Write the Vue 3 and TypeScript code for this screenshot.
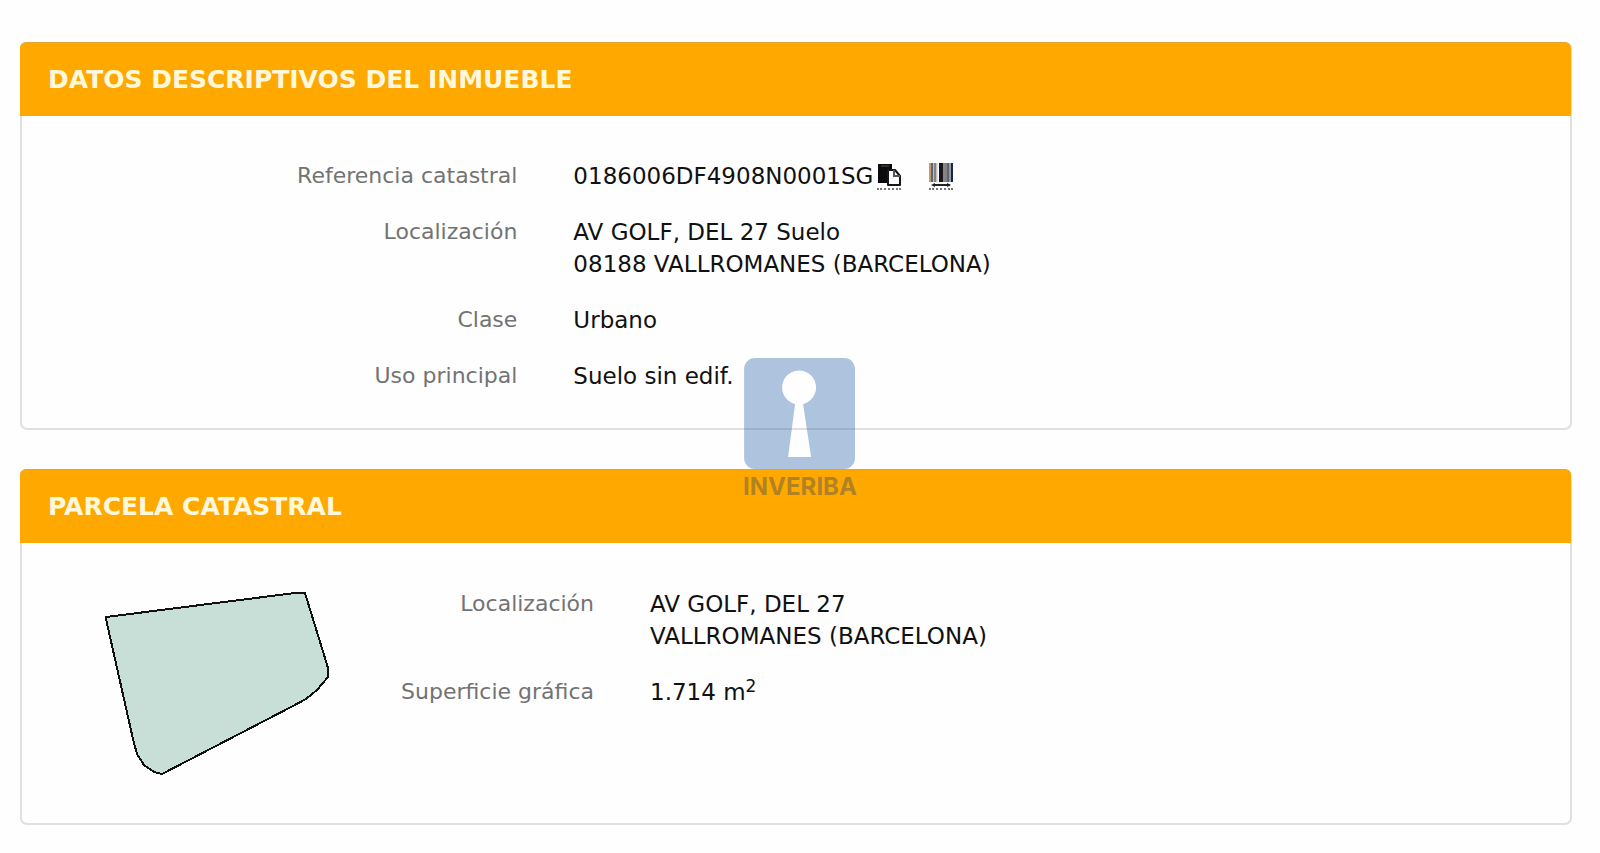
<script setup lang="ts">
interface Field {
  label: string
  lines: string[]
  sup?: string
  tools?: boolean
}

const propertyFields: Field[] = [
  { label: 'Referencia catastral', lines: ['0186006DF4908N0001SG'], tools: true },
  { label: 'Localización', lines: ['AV GOLF, DEL 27 Suelo', '08188 VALLROMANES (BARCELONA)'] },
  { label: 'Clase', lines: ['Urbano'] },
  { label: 'Uso principal', lines: ['Suelo sin edif.'] },
]

const parcelFields: Field[] = [
  { label: 'Localización', lines: ['AV GOLF, DEL 27', 'VALLROMANES (BARCELONA)'] },
  { label: 'Superficie gráfica', lines: ['1.714 m'], sup: '2' },
]

function copyReference(): void {
  navigator.clipboard?.writeText(propertyFields[0].lines[0])
}
</script>

<template>
  <main class="page">
    <section class="card">
      <h2 class="card-title">DATOS DESCRIPTIVOS DEL INMUEBLE</h2>
      <dl class="fields">
        <div v-for="field in propertyFields" :key="field.label" class="field">
          <dt>{{ field.label }}</dt>
          <dd>
            <div v-for="line in field.lines" :key="line" class="line">
              <span>{{ line }}</span>
              <template v-if="field.tools">
                <button class="tool" type="button" aria-label="Copiar" @click="copyReference">
                  <svg width="24" height="24" viewBox="0 0 24 24" aria-hidden="true">
                    <path d="M1 1h14v5h-4v14H1z" fill="#0b0b0f" />
                    <path d="M4 3h8" stroke="#555" stroke-width="1" />
                    <path d="M11 7h7l5 6v9H11z" fill="#fff" stroke="#16161c" stroke-width="2" stroke-linejoin="round" />
                    <path d="M17 7v6h6" fill="none" stroke="#55555c" stroke-width="2" />
                  </svg>
                </button>
                <a class="tool barcode" href="#" aria-label="Código de barras">
                  <svg width="24" height="24" viewBox="0 0 24 24" aria-hidden="true">
                    <path d="M1 0v19" stroke="#c79a68" stroke-width="2" />
                    <path d="M3 0v19M19 0v19" stroke="#56657f" stroke-width="2" />
                    <path d="M6 0v19" stroke="#85817f" stroke-width="3" />
                    <path d="M8 0v19" stroke="#bcc5cf" stroke-width="1" />
                    <path d="M12 0v19" stroke="#17171d" stroke-width="4" />
                    <path d="M15 0v19" stroke="#86868e" stroke-width="2" />
                    <path d="M17 0v19" stroke="#91806f" stroke-width="2" />
                    <path d="M21 0v19" stroke="#9999a0" stroke-width="2" />
                    <path d="M23 0v19" stroke="#172648" stroke-width="2" />
                    <path d="M4 22h17" stroke="#222" stroke-width="2" />
                    <path d="M2 22l4-2v4zM22 22l-4-2v4z" fill="#222" />
                  </svg>
                </a>
              </template>
            </div>
          </dd>
        </div>
      </dl>
    </section>

    <section class="card">
      <h2 class="card-title">PARCELA CATASTRAL</h2>
      <div class="parcel">
        <svg class="plot" width="226" height="186" viewBox="0 0 226 186" role="img" aria-label="Parcela">
          <path
            d="M2 26L10 25L191 2H201L217 54L224 77V86L213 99L202 108L189 115L58 183L50 181L40 174L33 163L29 148L2 28Z"
            fill="#c7dfd7"
            stroke="#111"
            stroke-width="2"
            shape-rendering="crispEdges"
          />
        </svg>
        <dl class="fields parcel-fields">
          <div v-for="field in parcelFields" :key="field.label" class="field">
            <dt>{{ field.label }}</dt>
            <dd>
              <div v-for="line in field.lines" :key="line" class="line">
                <span>{{ line }}<sup v-if="field.sup">{{ field.sup }}</sup></span>
              </div>
            </dd>
          </div>
        </dl>
      </div>
    </section>

    <div class="watermark">
      <svg width="111" height="111" viewBox="0 0 111 111" aria-hidden="true">
        <path
          fill="#396cac"
          fill-rule="evenodd"
          d="M11 0H100A11 11 0 0 1 111 11V100A11 11 0 0 1 100 111H11A11 11 0 0 1 0 100V11A11 11 0 0 1 11 0ZM51 46L44 99H67L59 46A17 17 0 1 0 51 46Z"
        />
      </svg>
      <span>INVERIBA</span>
    </div>
  </main>
</template>

<style>
body {
  margin: 0;
  background: #fefefe;
}
</style>

<style scoped>
.page {
  position: relative;
  display: flex;
  flex-direction: column;
  gap: 39px;
  padding: 42px 28px 28px 20px;
  font-family: 'DejaVu Sans', Verdana, sans-serif;
  font-size: 23px;
  line-height: 32px;
  color: #111;
}

.card {
  border: 2px solid #e0e0e0;
  border-top: 0;
  border-radius: 7px;
  background: #fefefe;
}

.card-title {
  margin: 0 -1px 0 -2px;
  padding: 22px 28px 21px;
  border-top: 1px solid #e3a532;
  border-radius: 6px 6px 0 0;
  background: #ffa800;
  color: #fff8dc;
  font-size: 25px;
  font-weight: bold;
  line-height: 30px;
}

.fields {
  display: flex;
  flex-direction: column;
  gap: 24px;
  margin: 0;
  padding: 44px 0 36px;
}

.field {
  display: grid;
  grid-template-columns: 32% 1fr;
  column-gap: 56px;
}

dt {
  color: #737373;
  font-size: 22px;
  text-align: right;
}

dd {
  margin: 0;
}

.line {
  display: flex;
  align-items: center;
  height: 32px;
}

.tool {
  display: flex;
  margin-left: 4px;
  padding: 1px 0;
  border: 0;
  border-bottom: 2px dotted #777;
  background: none;
}

.barcode {
  margin-left: 28px;
}

.parcel {
  display: flex;
  align-items: flex-start;
  padding: 45px 0 46px 82px;
}

.plot {
  margin-top: 3px;
}

.parcel-fields {
  flex: 1;
  padding: 0;
}

.parcel-fields .field {
  grid-template-columns: 264px 1fr;
}

sup {
  font-size: 17px;
  line-height: 0;
  vertical-align: 8px;
}

.watermark {
  position: absolute;
  top: 42%;
  left: 50%;
  display: flex;
  flex-direction: column;
  align-items: center;
  transform: translateX(-50%);
  opacity: 0.4;
  color: #3f4b58;
  font-family: Inter, sans-serif;
  font-size: 24px;
  font-weight: bold;
  line-height: 36px;
}
</style>
